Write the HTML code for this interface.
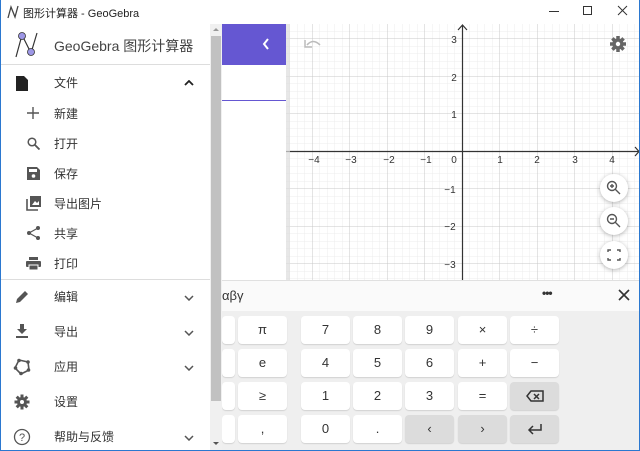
<!DOCTYPE html>
<html><head><meta charset="utf-8"><style>
*{margin:0;padding:0;box-sizing:border-box}
body{width:640px;height:451px;overflow:hidden;background:#fff;font-family:"Liberation Sans","Noto Sans CJK SC",sans-serif;position:relative}
.abs{position:absolute}
.mi{position:absolute;left:54px;font-size:12px;color:#333;line-height:14px}
.ic{position:absolute}
.key{position:absolute;width:49px;height:28px;background:#fff;border-radius:4px;box-shadow:0 1px 1px rgba(0,0,0,.12);font-size:13px;color:#333;text-align:center;line-height:28px}
.key.g{background:#dcdcdc}
</style></head><body>
<!-- window border -->
<div class="abs" style="left:0;top:0;width:640px;height:451px;border:1px solid #2b78d0;border-top:none;z-index:50;pointer-events:none"></div>
<!-- title bar -->
<div class="abs" style="left:0;top:0;width:640px;height:24px;background:#fff">
 <svg class="abs" style="left:6px;top:5px" width="14" height="14"><path d="M2 13 L5 2 L9 12 L12 1" fill="none" stroke="#444" stroke-width="1.3"/></svg>
 <div class="abs" style="left:23px;top:5px;font-size:11px;color:#222">图形计算器 - GeoGebra</div>
 <div class="abs" style="left:549px;top:11px;width:10px;height:1px;background:#333"></div>
 <div class="abs" style="left:583px;top:6px;width:9px;height:9px;border:1px solid #333"></div>
 <svg class="abs" style="left:617px;top:5px" width="11" height="11"><path d="M1 1L10 10M10 1L1 10" stroke="#333" stroke-width="1"/></svg>
</div>
<!-- graph -->
<svg class="abs" style="left:0;top:0" width="640" height="451">
<defs>
<pattern id="mn" patternUnits="userSpaceOnUse" x="462" y="151" width="7.5" height="7.5"><path d="M0 0H7.5M0 0V7.5" stroke="#ececec" stroke-width="1" fill="none"/></pattern>
<pattern id="mj" patternUnits="userSpaceOnUse" x="462" y="151" width="37.5" height="37.5"><path d="M0 0H37.5M0 0V37.5" stroke="#c8c8c8" stroke-width="1" fill="none"/></pattern>
</defs>
<rect x="286" y="24" width="354" height="256" fill="#fff"/>
<rect x="286" y="24" width="354" height="256" fill="url(#mn)"/>
<rect x="286" y="24" width="354" height="256" fill="url(#mj)"/>
<path d="M286 151.5H638M635 147L639 151.5L635 156" stroke="#333" fill="none" stroke-width="1.2"/>
<path d="M462.5 280V26M458 30L462.5 25L467 30" stroke="#333" fill="none" stroke-width="1.2"/>
<g font-size="10" fill="#333" font-family="Liberation Sans,sans-serif" text-anchor="middle">
<text x="314" y="163">−4</text><text x="351" y="163">−3</text><text x="389" y="163">−2</text><text x="426" y="163">−1</text><text x="454" y="163">0</text>
<text x="500" y="163">1</text><text x="537" y="163">2</text><text x="575" y="163">3</text><text x="612" y="163">4</text>
<text x="454" y="43">3</text><text x="454" y="81">2</text><text x="454" y="118">1</text><text x="450" y="193">−1</text><text x="450" y="230">−2</text><text x="450" y="268">−3</text>
</g>
<path d="M307 45 Q313 38 320 45" stroke="#bbb" fill="none" stroke-width="1.5"/><path d="M305 40V47H312" stroke="#bbb" fill="none" stroke-width="1.5"/>
<g transform="translate(618,44)" fill="#666"><circle r="5.5"/><g stroke="#666" stroke-width="3.5"><path d="M0 -8V8M-8 0H8M-5.6 -5.6L5.6 5.6M5.6 -5.6L-5.6 5.6"/></g><circle r="2.2" fill="#fff"/></g>
<g fill="#fff" style="filter:drop-shadow(0 1px 2px rgba(0,0,0,.3))"><circle cx="614" cy="188" r="14"/><circle cx="614" cy="221" r="14"/><circle cx="614" cy="255" r="14"/></g>
<g stroke="#555" fill="none" stroke-width="1.4"><circle cx="612" cy="186" r="4.5"/><path d="M615 189L620 194M610 186H614M612 184V188"/><circle cx="612" cy="219" r="4.5"/><path d="M615 222L620 227M610 219H614"/>
<path d="M608 252V250H611M617 250H620V252M620 258V260H617M611 260H608V258"/></g>
<!-- shadow left of graph -->
<rect x="286" y="24" width="4" height="256" fill="#ddd" opacity=".7"/>
</svg>
<!-- algebra panel -->
<div class="abs" style="left:222px;top:24px;width:64px;height:256px;background:#fff"></div>
<div class="abs" style="left:222px;top:24px;width:64px;height:41px;background:#6557d2"></div>
<svg class="abs" style="left:262px;top:38px" width="8" height="12"><path d="M6 1L2 6L6 11" stroke="#fff" stroke-width="2" fill="none"/></svg>
<div class="abs" style="left:222px;top:100px;width:64px;height:1px;background:#6557d2"></div>
<!-- keyboard -->
<div class="abs" style="left:210px;top:280px;width:430px;height:171px;background:#efefef"></div>
<div class="abs" style="left:210px;top:280px;width:430px;height:31px;background:#fafafa;border-top:1px solid #e0e0e0"></div>
<div class="abs" style="left:222px;top:288px;font-size:13px;color:#333">αβγ</div>
<div class="abs" style="left:542px;top:286px;font-size:12px;color:#333;letter-spacing:-1px;font-weight:bold">•••</div>
<svg class="abs" style="left:618px;top:289px" width="12" height="12"><path d="M1 1L11 11M11 1L1 11" stroke="#333" stroke-width="1.6"/></svg>
<div class="key" style="left:222px;top:316px;width:13px"></div><div class="key" style="left:222px;top:349px;width:13px"></div><div class="key" style="left:222px;top:382px;width:13px"></div><div class="key" style="left:222px;top:415px;width:13px"></div>
<div class="key" style="left:238px;top:316px">π</div><div class="key" style="left:301px;top:316px">7</div><div class="key" style="left:353px;top:316px">8</div><div class="key" style="left:405px;top:316px">9</div><div class="key" style="left:458px;top:316px">×</div><div class="key" style="left:510px;top:316px">÷</div>
<div class="key" style="left:238px;top:349px">e</div><div class="key" style="left:301px;top:349px">4</div><div class="key" style="left:353px;top:349px">5</div><div class="key" style="left:405px;top:349px">6</div><div class="key" style="left:458px;top:349px">+</div><div class="key" style="left:510px;top:349px">−</div>
<div class="key" style="left:238px;top:382px">≥</div><div class="key" style="left:301px;top:382px">1</div><div class="key" style="left:353px;top:382px">2</div><div class="key" style="left:405px;top:382px">3</div><div class="key" style="left:458px;top:382px">=</div><div class="key g" style="left:510px;top:382px"><svg width="18" height="12" style="margin-top:8px"><path d="M5 1H17V11H5L1 6Z" fill="none" stroke="#333" stroke-width="1.5"/><path d="M8 4L13 9M13 4L8 9" stroke="#333" stroke-width="1.5"/></svg></div>
<div class="key" style="left:238px;top:415px">,</div><div class="key" style="left:301px;top:415px">0</div><div class="key" style="left:353px;top:415px">.</div><div class="key g" style="left:405px;top:415px">‹</div><div class="key g" style="left:458px;top:415px">›</div><div class="key g" style="left:510px;top:415px"><svg width="16" height="12" style="margin-top:8px"><path d="M14 1V7H2M6 3L2 7L6 11" fill="none" stroke="#333" stroke-width="1.5"/></svg></div>
<!-- scrollbar -->
<div class="abs" style="left:210px;top:24px;width:12px;height:427px;background:#f0f0f0"></div>
<div class="abs" style="left:211px;top:36px;width:10px;height:365px;background:#c1c1c1"></div>
<div class="abs" style="left:213px;top:28px;width:0;height:0;border:3px solid transparent;border-bottom:3px solid #999;border-top:none"></div>
<div class="abs" style="left:213px;top:442px;width:0;height:0;border:3px solid transparent;border-top:3px solid #555;border-bottom:none"></div>
<!-- menu -->
<div class="abs" style="left:0;top:24px;width:210px;height:427px;background:#fff"></div>
<svg class="abs" style="left:14px;top:31px" width="26" height="28"><path d="M2 26L8 4L17 22L23 2" fill="none" stroke="#333" stroke-width="1.2"/><circle cx="8" cy="5" r="3.5" fill="#9d97e6" stroke="#333" stroke-width=".8"/><circle cx="17" cy="21" r="3.5" fill="#9d97e6" stroke="#333" stroke-width=".8"/></svg>
<div class="abs" style="left:54px;top:36px;font-size:14px;color:#444">GeoGebra 图形计算器</div>
<div class="abs" style="left:0;top:64px;width:210px;height:1px;background:#ddd"></div>
<svg class="ic" style="left:16px;top:76px" width="12" height="15"><path d="M0 0H8L12 4V15H0Z" fill="#222"/></svg>
<div class="mi" style="top:76px">文件</div>
<svg class="abs" style="left:184px;top:80px" width="10" height="6"><path d="M1 5L5 1L9 5" stroke="#222" stroke-width="1.8" fill="none"/></svg>
<svg class="ic" style="left:27px;top:107px" width="12" height="12"><path d="M6 0V12M0 6H12" stroke="#555" stroke-width="1.4"/></svg><div class="mi" style="top:107px">新建</div>
<svg class="ic" style="left:27px;top:137px" width="13" height="13"><circle cx="5" cy="5" r="3.8" stroke="#555" stroke-width="1.5" fill="none"/><path d="M8 8L12.5 12.5" stroke="#555" stroke-width="1.8"/></svg><div class="mi" style="top:137px">打开</div>
<svg class="ic" style="left:27px;top:167px" width="13" height="13"><path d="M0 0H10L13 3V13H0Z" fill="#555"/><rect x="2" y="2" width="8" height="3" fill="#fff"/><circle cx="6.5" cy="9" r="1.8" fill="#fff"/></svg><div class="mi" style="top:167px">保存</div>
<svg class="ic" style="left:26px;top:196px" width="15" height="15"><path d="M1 3V14H12" stroke="#555" stroke-width="1.6" fill="none"/><rect x="4" y="0" width="11" height="11" fill="#555"/><path d="M6 9L9 5L11 7L13 5V9Z" fill="#fff"/></svg><div class="mi" style="top:197px">导出图片</div>
<svg class="ic" style="left:27px;top:226px" width="13" height="14"><circle cx="11" cy="2" r="2" fill="#555"/><circle cx="2" cy="7" r="2" fill="#555"/><circle cx="11" cy="12" r="2" fill="#555"/><path d="M11 2L2 7L11 12" stroke="#555" stroke-width="1.2" fill="none"/></svg><div class="mi" style="top:227px">共享</div>
<svg class="ic" style="left:26px;top:257px" width="15" height="13"><rect x="3" y="0" width="9" height="3" fill="#555"/><rect x="0" y="4" width="15" height="6" rx="1" fill="#555"/><rect x="3" y="8" width="9" height="5" fill="#555" stroke="#fff" stroke-width="1"/></svg><div class="mi" style="top:257px">打印</div>
<div class="abs" style="left:0;top:279px;width:210px;height:1px;background:#ddd"></div>
<svg class="ic" style="left:15px;top:290px" width="14" height="14"><path d="M1 13L2 9L10 1L13 4L5 12Z" fill="#555"/></svg><div class="mi" style="top:290px">编辑</div>
<svg class="ic" style="left:16px;top:324px" width="12" height="14"><path d="M4 0H8V5H11L6 10L1 5H4Z M0 12H12V14H0Z" fill="#555"/></svg><div class="mi" style="top:325px">导出</div>
<svg class="ic" style="left:13px;top:358px" width="18" height="18"><path d="M6 2L15 4L16 12L8 16L2 10Z" fill="none" stroke="#555" stroke-width="1.6"/><g fill="#555"><circle cx="6" cy="2.5" r="1.8"/><circle cx="15" cy="4" r="1.8"/><circle cx="15.5" cy="12" r="1.8"/><circle cx="8" cy="15.5" r="1.8"/><circle cx="2.5" cy="10" r="1.8"/></g></svg><div class="mi" style="top:360px">应用</div>
<svg class="ic" style="left:14px;top:394px" width="16" height="16"><g transform="translate(8,8)"><circle r="5" fill="#555"/><path d="M0 -7.5V7.5M-7.5 0H7.5M-5.3 -5.3L5.3 5.3M5.3 -5.3L-5.3 5.3" stroke="#555" stroke-width="3"/><circle r="2" fill="#fff"/></g></svg><div class="mi" style="top:395px">设置</div>
<svg class="ic" style="left:13px;top:428px" width="18" height="18"><circle cx="9" cy="9" r="7.5" fill="none" stroke="#555" stroke-width="1.3"/><text x="9" y="13" font-size="11" text-anchor="middle" fill="#555" font-family="Liberation Sans">?</text></svg><div class="mi" style="top:430px">帮助与反馈</div>
<svg class="abs" style="left:184px;top:295px" width="10" height="6"><path d="M1 1L5 5L9 1" stroke="#555" stroke-width="1.5" fill="none"/></svg>
<svg class="abs" style="left:184px;top:330px" width="10" height="6"><path d="M1 1L5 5L9 1" stroke="#555" stroke-width="1.5" fill="none"/></svg>
<svg class="abs" style="left:184px;top:365px" width="10" height="6"><path d="M1 1L5 5L9 1" stroke="#555" stroke-width="1.5" fill="none"/></svg>
<svg class="abs" style="left:184px;top:435px" width="10" height="6"><path d="M1 1L5 5L9 1" stroke="#555" stroke-width="1.5" fill="none"/></svg>
</body></html>
